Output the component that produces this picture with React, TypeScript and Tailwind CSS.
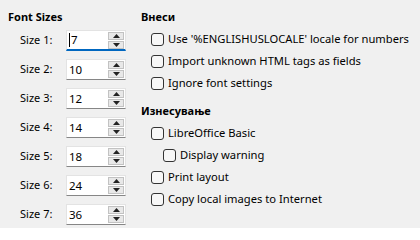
import React from "react";

const sizes = ["7", "10", "12", "14", "18", "24", "36"];

function Spin({ value, focused }: { value: string; focused?: boolean }) {
  return (
    <div
      className={
        "relative flex h-[21px] w-[60px] items-center bg-white border border-[#e3e3e3] " +
        (focused ? "border-b-2 border-b-[#0067c0]" : "border-b-[#868686]")
      }
    >
      <span className="flex items-center pl-[2px] text-[11.5px] leading-none text-black">
        {focused && <span className="mr-[1px] inline-block h-[14px] w-px bg-black" />}
        {value}
      </span>
      <div className="absolute right-[1px] top-[1px] flex w-[16px] flex-col gap-px">
        <div className="flex h-[8px] items-center justify-center border border-[#c2c2c2] bg-[#e8e8e8]">
          <svg width="7" height="4" viewBox="0 0 7 4">
            <path d="M0 4 L3.5 0 L7 4 Z" fill="#222" />
          </svg>
        </div>
        <div className="flex h-[8px] items-center justify-center border border-[#c2c2c2] bg-[#e8e8e8]">
          <svg width="7" height="4" viewBox="0 0 7 4">
            <path d="M0 0 L3.5 4 L7 0 Z" fill="#222" />
          </svg>
        </div>
      </div>
    </div>
  );
}

function Check({ label, indent }: { label: string; indent?: boolean }) {
  return (
    <div className={"flex h-[22px] items-center " + (indent ? "pl-[22px]" : "pl-[10px]")}>
      <span className="h-[13px] w-[13px] shrink-0 rounded-[3px] border border-[#333] bg-[#f7f7f7]" />
      <span className="ml-[4px] whitespace-nowrap text-[11.2px] leading-none text-black">{label}</span>
    </div>
  );
}

export default function App() {
  return (
    <div
      className="flex h-[228px] w-[420px] bg-[#f0f0f0] text-black"
      style={{ fontFamily: '"Noto Sans", "Open Sans", sans-serif' }}
    >
      <div className="w-[141px] shrink-0 pl-[8px] pt-[9px]">
        <div className="h-[16px] text-[11px] font-bold leading-[16px]">Font Sizes</div>
        <div className="mt-[5px] flex flex-col gap-[8px]">
          {sizes.map((s, i) => (
            <div key={i} className="flex items-center">
              <span className="w-[58px] pl-[12px] text-[11px]">Size {i + 1}:</span>
              <Spin value={s} focused={i === 0} />
            </div>
          ))}
        </div>
      </div>
      <div className="flex-1 pt-[9px]">
        <div className="h-[16px] text-[11px] font-bold leading-[16px]">Внеси</div>
        <div className="mt-[3px]">
          <Check label="Use '%ENGLISHUSLOCALE' locale for numbers" />
          <Check label="Import unknown HTML tags as fields" />
          <Check label="Ignore font settings" />
        </div>
        <div className="mt-[9px] h-[16px] text-[11px] font-bold leading-[16px]">Изнесување</div>
        <div className="mt-[3px]">
          <Check label="LibreOffice Basic" />
          <Check label="Display warning" indent />
          <Check label="Print layout" />
          <Check label="Copy local images to Internet" />
        </div>
      </div>
    </div>
  );
}
